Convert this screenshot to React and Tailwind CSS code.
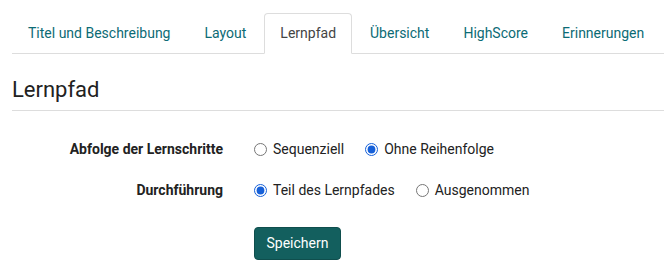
import React, { useState } from "react";

const tabs = [
  "Titel und Beschreibung",
  "Layout",
  "Lernpfad",
  "Übersicht",
  "HighScore",
  "Erinnerungen",
];

const RadioRow = ({ label, name, options, value, onChange }) => (
  <div className="flex items-center h-[20px]">
    <div className="w-[211px] text-right font-bold text-[14px] text-[#222]">
      {label}
    </div>
    <div className="flex items-center gap-[21px] ml-[31px]">
      {options.map((opt) => (
        <label key={opt} className="flex items-center gap-[6px] text-[14px] text-[#222]">
          <input
            type="radio"
            name={name}
            checked={value === opt}
            onChange={() => onChange(opt)}
            className="m-0 w-[13px] h-[13px] accent-[#1660d8]"
          />
          {opt}
        </label>
      ))}
    </div>
  </div>
);

export default function App() {
  const [active, setActive] = useState("Lernpfad");
  const [sequence, setSequence] = useState("Ohne Reihenfolge");
  const [mode, setMode] = useState("Teil des Lernpfades");

  return (
    <div
      className="w-[664px] h-[272px] bg-white pl-3 pt-[13px] overflow-hidden"
      style={{ fontFamily: "Roboto, 'Liberation Sans', sans-serif" }}
    >
      {/* Tabs */}
      <ul className="flex border-b border-[#ddd]">
        {tabs.map((tab) => (
          <li key={tab} className="flex shrink-0 mr-0.5 -mb-px">
            <button
              onClick={() => setActive(tab)}
              className={`block h-[41px] px-[15px] text-[14px] whitespace-nowrap rounded-t border ${
                active === tab
                  ? "bg-white border-[#ddd] border-b-white text-[#444]"
                  : "border-transparent text-[#0c6b75]"
              }`}
            >
              {tab}
            </button>
          </li>
        ))}
      </ul>

      {/* Heading */}
      <h2 className="mt-[22px] pb-[6px] text-[22px] leading-[28px] text-[#222] border-b border-[#ddd]">
        Lernpfad
      </h2>

      {/* Form */}
      <div className="mt-[28px] flex flex-col gap-[21px]">
        <RadioRow
          label="Abfolge der Lernschritte"
          name="seq"
          options={["Sequenziell", "Ohne Reihenfolge"]}
          value={sequence}
          onChange={setSequence}
        />
        <RadioRow
          label="Durchführung"
          name="mode"
          options={["Teil des Lernpfades", "Ausgenommen"]}
          value={mode}
          onChange={setMode}
        />
      </div>

      <div className="mt-[27px] ml-[242px]">
        <button className="w-[87px] h-[33px] rounded bg-[#135f5e] border border-[#0f4e4d] text-white text-[14px]">
          Speichern
        </button>
      </div>
    </div>
  );
}
